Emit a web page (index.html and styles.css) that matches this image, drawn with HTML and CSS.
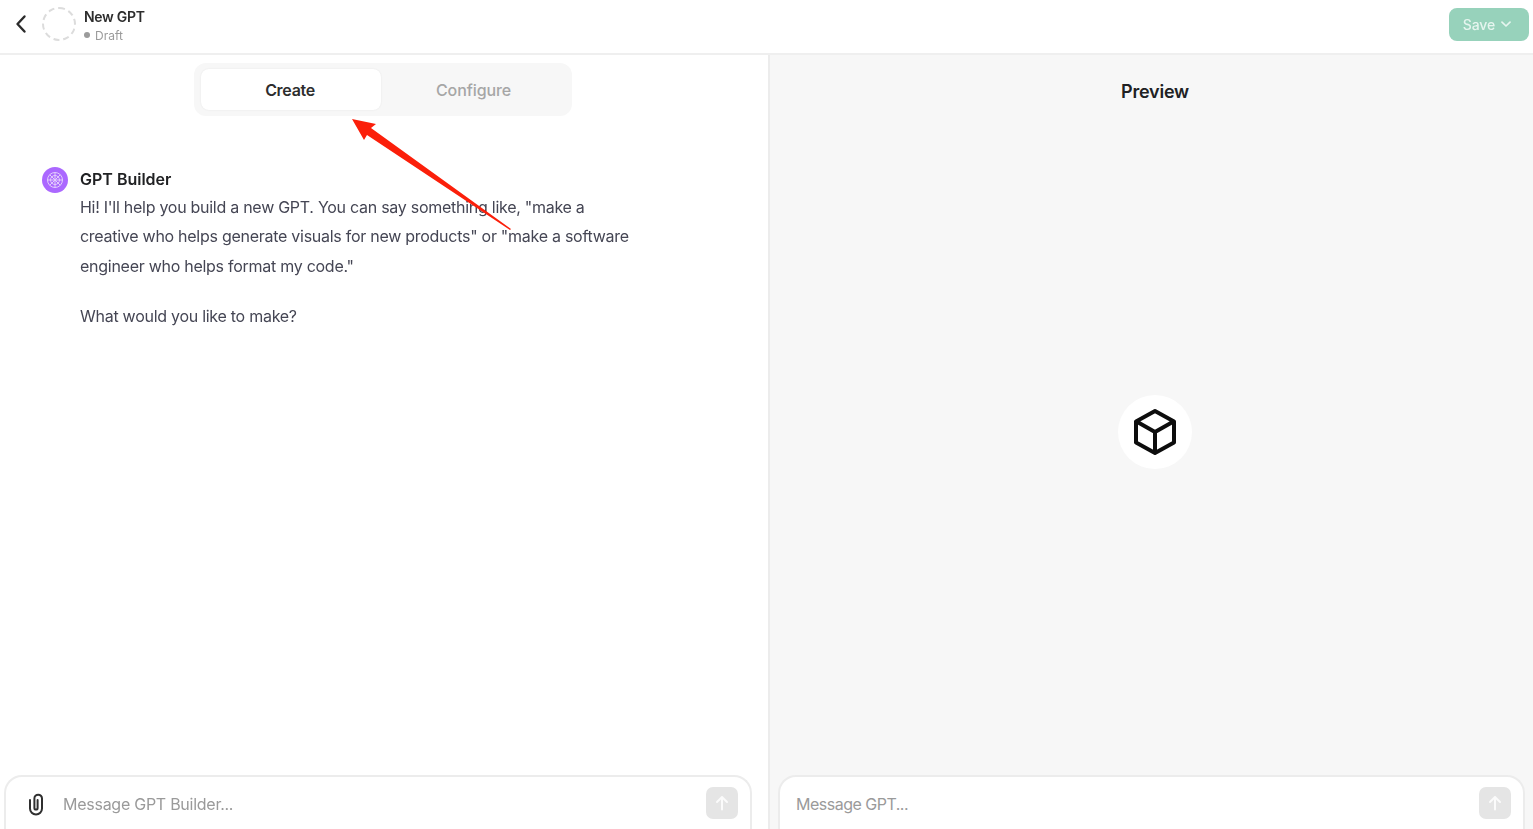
FILE: index.html
```html
<!DOCTYPE html>
<html lang="en">
<head>
  <meta charset="UTF-8">
  <title>New GPT</title>
  <link rel="stylesheet" href="styles.css">
</head>
<body>
  <header class="topbar">
    <div class="topbar-left">
      <svg class="back-icon" width="12" height="20" viewBox="0 0 12 20"><path d="M9.500 2.500 L2.500 10 L9.500 17.500" fill="none" stroke="#2b2b2b" stroke-width="2.400" stroke-linecap="round" stroke-linejoin="round"/></svg>
      <div class="avatar-empty"></div>
      <div class="title-block">
        <div class="title">New GPT</div>
        <div class="status"><span class="status-dot"></span>Draft</div>
      </div>
    </div>
    <button class="save-btn">Save
      <svg width="10" height="7" viewBox="0 0 10 7"><path d="M1 1.200 L5 5 L9 1.200" fill="none" stroke="#e6f5ef" stroke-width="1.700" stroke-linecap="round" stroke-linejoin="round"/></svg>
    </button>
  </header>

  <main class="panels">
    <section class="panel panel-builder">
      <div class="tabs">
        <div class="tab tab-active">Create</div>
        <div class="tab">Configure</div>
      </div>

      <div class="chat">
        <div class="chat-avatar">
          <svg width="18" height="18" viewBox="0 0 18 18" fill="none" stroke="#e3cdfb" stroke-width="1">
            <circle cx="9" cy="9" r="7.500"/>
            <circle cx="9" cy="9" r="4.500"/>
            <path d="M9 1.500 V16.500 M1.500 9 H16.500 M3.700 3.700 L14.300 14.300 M14.300 3.700 L3.700 14.300"/>
          </svg>
        </div>
        <div class="chat-body">
          <div class="chat-name">GPT Builder</div>
          <p class="chat-text">Hi! I'll help you build a new GPT. You can say something like, "make a creative who helps generate visuals for new products" or "make a software engineer who helps format my code."</p>
          <p class="chat-text">What would you like to make?</p>
        </div>
      </div>

      <div class="composer">
        <svg class="clip-icon" width="18" height="24" viewBox="0 0 18 24"><path d="M3 8 V16.500 a6 6 0 0 0 12 0 V6.500 a3.800 3.800 0 0 0 -7.600 0 V16 a1.600 1.600 0 0 0 3.200 0 V8" fill="none" stroke="#2f2f2f" stroke-width="2" stroke-linecap="round"/></svg>
        <span class="placeholder">Message GPT Builder...</span>
        <div class="send-btn">
          <svg width="14" height="16" viewBox="0 0 14 16"><path d="M7 14.500 V2 M2 7 L7 2 L12 7" fill="none" stroke="#fbfbfb" stroke-width="2" stroke-linecap="round" stroke-linejoin="round"/></svg>
        </div>
      </div>
    </section>

    <section class="panel panel-preview">
      <h2 class="preview-title">Preview</h2>
      <div class="preview-center">
        <div class="cube-circle">
          <svg width="46" height="48" viewBox="0 0 46 48"><path d="M23 3 L42 13.500 V34.500 L23 45 L4 34.500 V13.500 Z M4.500 13.500 L23 24 L41.500 13.500 M23 24 V44.500" fill="none" stroke="#0d0d0d" stroke-width="4" stroke-linejoin="round" stroke-linecap="round"/></svg>
        </div>
      </div>
      <div class="composer composer-preview">
        <span class="placeholder placeholder-short">Message GPT...</span>
        <div class="send-btn">
          <svg width="14" height="16" viewBox="0 0 14 16"><path d="M7 14.500 V2 M2 7 L7 2 L12 7" fill="none" stroke="#fbfbfb" stroke-width="2" stroke-linecap="round" stroke-linejoin="round"/></svg>
        </div>
      </div>
    </section>
  </main>

  <svg class="arrow" width="170" height="120" viewBox="0 0 170 120"><polygon points="2,0 26,5 21,9 161,110 160,111 17,16 14,21" fill="#fb1f0a"/></svg>
</body>
</html>
```

FILE: styles.css
```css
* {
  box-sizing: border-box;
}
html, body {
  height: 100%;
}
body {
  margin: 0;
  font-family: Inter, "Liberation Sans", sans-serif;
  background: #ffffff;
  color: #202123;
  overflow: hidden;
  display: flex;
  flex-direction: column;
}
.topbar, .panels {
  filter: blur(0.4px);
}
.topbar {
  height: 55px;
  flex: none;
  display: flex;
  align-items: center;
  justify-content: space-between;
  padding: 0 4px 5px 15px;
  border-bottom: 2px solid #efefef;
}
.topbar-left {
  display: flex;
  align-items: center;
}
.back-icon {
  margin-right: 15px;
}
.avatar-empty {
  width: 34px;
  height: 34px;
  border: 2px dashed #dcdcdc;
  border-radius: 50%;
  margin-right: 8px;
}
.title-block {
  margin-top: 4px;
}
.title {
  font-size: 14px;
  font-weight: 600;
  line-height: 18px;
  letter-spacing: -0.3px;
  color: #2d2d2d;
}
.status {
  display: flex;
  align-items: center;
  font-size: 12px;
  line-height: 19px;
  color: #9b9b9b;
}
.status-dot {
  width: 6px;
  height: 6px;
  border-radius: 50%;
  background: #9b9b9b;
  margin-right: 5px;
}
.save-btn {
  width: 80px;
  height: 33px;
  padding: 0 4px 0 0;
  border: none;
  border-radius: 8px;
  background: #97d2bb;
  color: #e6f5ef;
  font-family: inherit;
  font-size: 14px;
  font-weight: 500;
  letter-spacing: -0.1px;
  display: flex;
  align-items: center;
  justify-content: center;
  gap: 6px;
}
.panels {
  flex: 1;
  display: flex;
  min-height: 0;
}
.panel {
  display: flex;
  flex-direction: column;
}
.panel-builder {
  width: 770px;
  border-right: 2px solid #ececec;
  padding: 8px 16px 0 4px;
}
.panel-preview {
  flex: 1;
  background: #f7f7f7;
  padding: 0 8px;
}
.tabs {
  align-self: flex-start;
  margin-left: 190px;
  width: 378px;
  height: 53px;
  padding: 6px 6px 6px 7px;
  background: #f7f7f7;
  border-radius: 12px;
  display: flex;
  font-size: 16px;
  font-weight: 500;
  letter-spacing: -0.1px;
}
.tab {
  flex: 1;
  display: flex;
  align-items: center;
  justify-content: center;
  border-radius: 8px;
  color: #a6a6a6;
}
.tab-active {
  flex: none;
  width: 180px;
  padding-right: 2px;
  background: #ffffff;
  color: #2d2d2d;
  font-weight: 600;
  letter-spacing: -0.3px;
  box-shadow: 0 0 2px rgba(0,0,0,0.08);
}
.chat {
  flex: 1;
  display: flex;
  padding: 51px 0 0 38px;
  min-height: 0;
}
.chat-avatar {
  flex: none;
  width: 26px;
  height: 26px;
  border-radius: 50%;
  background: #ab68ff;
  display: flex;
  align-items: center;
  justify-content: center;
  margin-right: 12px;
}
.chat-name {
  font-size: 16px;
  font-weight: 600;
  line-height: 24px;
  margin-bottom: 2px;
  color: #202123;
}
.chat-body {
  width: 560px;
}
.chat-text {
  margin: 0 0 20.600px;
  font-size: 16px;
  line-height: 29.400px;
  letter-spacing: -0.27px;
  color: #454654;
}
.composer {
  flex: none;
  height: 54px;
  display: flex;
  align-items: center;
  border: 2px solid #ececec;
  border-bottom: none;
  border-radius: 18px 18px 0 0;
  background: #ffffff;
  padding: 2px 12px 0 21px;
  width: 748px;
}
.composer-preview {
  width: 747px;
  padding-left: 16px;
  padding-right: 12px;
}
.clip-icon {
  margin-right: 18px;
  flex: none;
}
.placeholder {
  flex: 1;
  font-size: 16px;
  color: #9a9a9a;
  letter-spacing: -0.26px;
}
.placeholder-short {
  letter-spacing: -0.5px;
}
.send-btn {
  width: 32px;
  height: 32px;
  margin-top: -2px;
  border-radius: 7px;
  background: #e5e5e5;
  display: flex;
  align-items: center;
  justify-content: center;
}
.preview-title {
  margin: 24px 0 0;
  padding-left: 7px;
  text-align: center;
  font-size: 18px;
  font-weight: 600;
  line-height: 26px;
  color: #202123;
  letter-spacing: -0.2px;
}
.preview-center {
  flex: 1;
  display: flex;
  align-items: center;
  justify-content: center;
  padding: 0 0 17px 7px;
  min-height: 0;
}
.cube-circle {
  width: 74px;
  height: 74px;
  border-radius: 50%;
  background: #ffffff;
  display: flex;
  align-items: center;
  justify-content: center;
}
.arrow {
  position: absolute;
  left: 350px;
  top: 119px;
}
```
